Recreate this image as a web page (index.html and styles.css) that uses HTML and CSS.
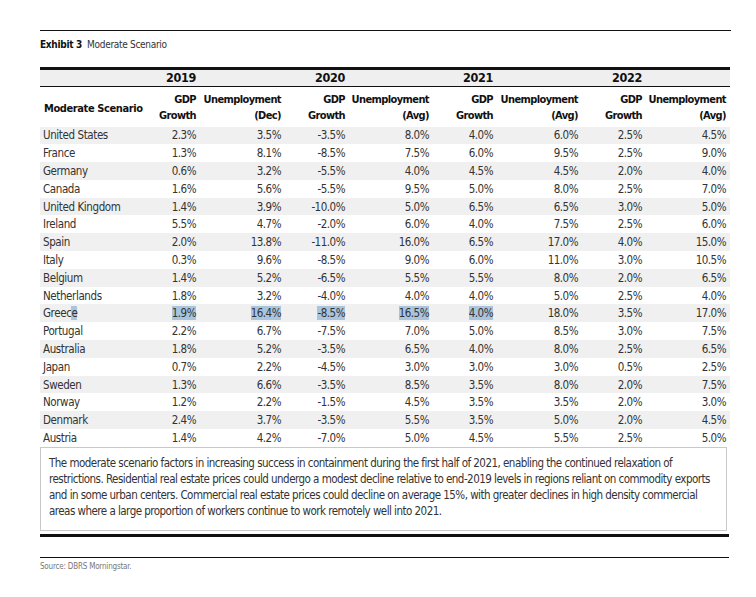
FILE: index.html
```html
<!DOCTYPE html>
<html>
<head>
<meta charset="utf-8">
<link rel="stylesheet" href="styles.css">
</head>
<body>
<div class="page">
  <div class="title"><b>Exhibit 3</b>&nbsp; Moderate Scenario</div>
  <table class="tbl">
    <colgroup>
      <col class="c-name"><col class="c-g1"><col class="c-u"><col class="c-g"><col class="c-u2"><col class="c-g"><col class="c-u"><col class="c-g"><col class="c-u2">
    </colgroup>
    <thead>
      <tr class="years">
        <th></th><th class="r">2019</th><th></th><th class="r">2020</th><th></th><th class="r">2021</th><th></th><th class="r">2022</th><th></th>
      </tr>
      <tr class="heads">
        <th class="name">Moderate Scenario</th>
        <th class="r">GDP<br>Growth</th><th class="r">Unemployment<br>(Dec)</th>
        <th class="r">GDP<br>Growth</th><th class="r">Unemployment<br>(Avg)</th>
        <th class="r">GDP<br>Growth</th><th class="r">Unemployment<br>(Avg)</th>
        <th class="r">GDP<br>Growth</th><th class="r">Unemployment<br>(Avg)</th>
      </tr>
    </thead>
    <tbody>
      <tr><td>United States</td><td>2.3%</td><td>3.5%</td><td>-3.5%</td><td>8.0%</td><td>4.0%</td><td>6.0%</td><td>2.5%</td><td>4.5%</td></tr>
      <tr><td>France</td><td>1.3%</td><td>8.1%</td><td>-8.5%</td><td>7.5%</td><td>6.0%</td><td>9.5%</td><td>2.5%</td><td>9.0%</td></tr>
      <tr><td>Germany</td><td>0.6%</td><td>3.2%</td><td>-5.5%</td><td>4.0%</td><td>4.5%</td><td>4.5%</td><td>2.0%</td><td>4.0%</td></tr>
      <tr><td>Canada</td><td>1.6%</td><td>5.6%</td><td>-5.5%</td><td>9.5%</td><td>5.0%</td><td>8.0%</td><td>2.5%</td><td>7.0%</td></tr>
      <tr><td>United Kingdom</td><td>1.4%</td><td>3.9%</td><td>-10.0%</td><td>5.0%</td><td>6.5%</td><td>6.5%</td><td>3.0%</td><td>5.0%</td></tr>
      <tr><td>Ireland</td><td>5.5%</td><td>4.7%</td><td>-2.0%</td><td>6.0%</td><td>4.0%</td><td>7.5%</td><td>2.5%</td><td>6.0%</td></tr>
      <tr><td>Spain</td><td>2.0%</td><td>13.8%</td><td>-11.0%</td><td>16.0%</td><td>6.5%</td><td>17.0%</td><td>4.0%</td><td>15.0%</td></tr>
      <tr><td>Italy</td><td>0.3%</td><td>9.6%</td><td>-8.5%</td><td>9.0%</td><td>6.0%</td><td>11.0%</td><td>3.0%</td><td>10.5%</td></tr>
      <tr><td>Belgium</td><td>1.4%</td><td>5.2%</td><td>-6.5%</td><td>5.5%</td><td>5.5%</td><td>8.0%</td><td>2.0%</td><td>6.5%</td></tr>
      <tr><td>Netherlands</td><td>1.8%</td><td>3.2%</td><td>-4.0%</td><td>4.0%</td><td>4.0%</td><td>5.0%</td><td>2.5%</td><td>4.0%</td></tr>
      <tr><td>Greec<span class="sel">e</span></td><td><span class="sel">1.9%</span></td><td><span class="sel">16.4%</span></td><td><span class="sel">-8.5%</span></td><td><span class="sel">16.5%</span></td><td><span class="sel">4.0%</span></td><td>18.0%</td><td>3.5%</td><td>17.0%</td></tr>
      <tr><td>Portugal</td><td>2.2%</td><td>6.7%</td><td>-7.5%</td><td>7.0%</td><td>5.0%</td><td>8.5%</td><td>3.0%</td><td>7.5%</td></tr>
      <tr><td>Australia</td><td>1.8%</td><td>5.2%</td><td>-3.5%</td><td>6.5%</td><td>4.0%</td><td>8.0%</td><td>2.5%</td><td>6.5%</td></tr>
      <tr><td>Japan</td><td>0.7%</td><td>2.2%</td><td>-4.5%</td><td>3.0%</td><td>3.0%</td><td>3.0%</td><td>0.5%</td><td>2.5%</td></tr>
      <tr><td>Sweden</td><td>1.3%</td><td>6.6%</td><td>-3.5%</td><td>8.5%</td><td>3.5%</td><td>8.0%</td><td>2.0%</td><td>7.5%</td></tr>
      <tr><td>Norway</td><td>1.2%</td><td>2.2%</td><td>-1.5%</td><td>4.5%</td><td>3.5%</td><td>3.5%</td><td>2.0%</td><td>3.0%</td></tr>
      <tr><td>Denmark</td><td>2.4%</td><td>3.7%</td><td>-3.5%</td><td>5.5%</td><td>3.5%</td><td>5.0%</td><td>2.0%</td><td>4.5%</td></tr>
      <tr><td>Austria</td><td>1.4%</td><td>4.2%</td><td>-7.0%</td><td>5.0%</td><td>4.5%</td><td>5.5%</td><td>2.5%</td><td>5.0%</td></tr>
    </tbody>
  </table>
  <div class="note">
    The moderate scenario factors in increasing success in containment during the first half of 2021, enabling the continued relaxation of<br>
    restrictions. Residential real estate prices could undergo a modest decline relative to end-2019 levels in regions reliant on commodity exports<br>
    and in some urban centers. Commercial real estate prices could decline on average 15%, with greater declines in high density commercial<br>
    areas where a large proportion of workers continue to work remotely well into 2021.
  </div>
  <div class="thick"></div>
  <div class="source">Source: DBRS Morningstar.</div>
</div>
</body>
</html>
```

FILE: styles.css
```css
html, body {
  margin: 0;
  padding: 0;
  background: #ffffff;
}

body {
  font-family: "DejaVu Sans Condensed", "DejaVu Sans", sans-serif;
  font-stretch: condensed;
  color: #333333;
}

.page {
  width: 691px;
  margin-left: 40px;
  padding-top: 30px;
}

.title {
  border-top: 1px solid #111111;
  padding-top: 7px;
  height: 29px;
  font-size: 10px;
  line-height: 13px;
  letter-spacing: -0.3px;
  color: #333333;
}

.title b {
  color: #111111;
}

.tbl {
  width: 690px;
  border-collapse: collapse;
  table-layout: fixed;
  border-top: 3px solid #111111;
}

.c-name { width: 110px; }
.c-g1 { width: 50px; }
.c-u { width: 85px; }
.c-g { width: 64px; }
.c-u2 { width: 84px; }

.tbl th {
  font-weight: bold;
  color: #111111;
  padding: 0 4px 0 0;
  white-space: nowrap;
}

.years th {
  background: #efefef;
  height: 16px;
  font-size: 12.5px;
  line-height: 16px;
  letter-spacing: -0.3px;
  border-bottom: 1px solid #111111;
}

.heads th {
  box-sizing: border-box;
  height: 40px;
  font-size: 11px;
  line-height: 16px;
  letter-spacing: -0.6px;
  vertical-align: bottom;
  padding-bottom: 3px;
}

.heads th.name {
  text-align: left;
  padding-left: 4px;
  padding-bottom: 10px;
  letter-spacing: -0.4px;
}

.tbl th.r {
  text-align: right;
}

.tbl td {
  height: 17.8px;
  padding: 0 4px 0 0;
  font-size: 11.5px;
  line-height: 14px;
  letter-spacing: -0.5px;
  text-align: right;
  white-space: nowrap;
  color: #333333;
}

.tbl td:first-child {
  text-align: left;
  padding-left: 3px;
  letter-spacing: -0.4px;
}

.tbl tbody tr:nth-child(odd) td {
  background: #f0f0f0;
}

.sel {
  background: #a9c5de;
}

.note {
  margin-top: 0;
  width: 677px;
  height: 75px;
  border: 1px solid #c9c9c9;
  padding: 7px 0 0 8px;
  box-sizing: content-box;
  font-size: 11.5px;
  line-height: 16px;
  letter-spacing: -0.53px;
  white-space: nowrap;
  color: #333333;
}

.thick {
  margin-top: 3px;
  width: 689px;
  border-top: 3px solid #111111;
  height: 20px;
  border-bottom: 1px solid #111111;
}

.source {
  padding-top: 4px;
  font-size: 8px;
  line-height: 10px;
  letter-spacing: -0.2px;
  color: #777777;
}
```
